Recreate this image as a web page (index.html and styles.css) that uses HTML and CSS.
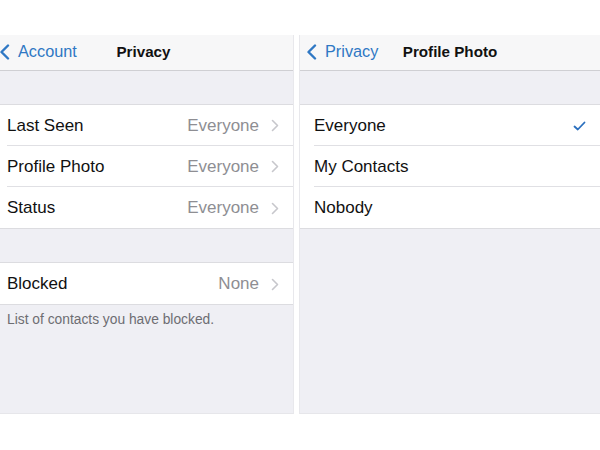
FILE: index.html
```html
<!DOCTYPE html>
<html>
<head>
<meta charset="utf-8">
<link rel="stylesheet" href="styles.css">
</head>
<body>
<div class="screens">
  <section class="panel panel-left">
    <header class="nav nav-left">
      <div class="back">
        <svg class="back-chev" width="11" height="16" viewBox="0 0 11 16"><path d="M9 1.5 L2.5 8 L9 14.5" fill="none" stroke="#2f78c4" stroke-width="2.4" stroke-linecap="round" stroke-linejoin="round"/></svg>
        <span class="back-label">Account</span>
      </div>
      <div class="title">Privacy</div>
    </header>
    <div class="spacer"></div>
    <div class="group">
      <div class="row"><div class="row-inner"><span class="label">Last Seen</span><span class="value">Everyone</span><svg class="chev" width="8" height="13" viewBox="0 0 8 13"><path d="M1.5 1.5 L6.5 6.5 L1.5 11.5" fill="none" stroke="#c7c7cc" stroke-width="1.6" stroke-linecap="round" stroke-linejoin="round"/></svg></div></div>
      <div class="row"><div class="row-inner"><span class="label">Profile Photo</span><span class="value">Everyone</span><svg class="chev" width="8" height="13" viewBox="0 0 8 13"><path d="M1.5 1.5 L6.5 6.5 L1.5 11.5" fill="none" stroke="#c7c7cc" stroke-width="1.6" stroke-linecap="round" stroke-linejoin="round"/></svg></div></div>
      <div class="row last"><div class="row-inner"><span class="label">Status</span><span class="value">Everyone</span><svg class="chev" width="8" height="13" viewBox="0 0 8 13"><path d="M1.5 1.5 L6.5 6.5 L1.5 11.5" fill="none" stroke="#c7c7cc" stroke-width="1.6" stroke-linecap="round" stroke-linejoin="round"/></svg></div></div>
    </div>
    <div class="spacer"></div>
    <div class="group">
      <div class="row last"><div class="row-inner"><span class="label">Blocked</span><span class="value">None</span><svg class="chev" width="8" height="13" viewBox="0 0 8 13"><path d="M1.5 1.5 L6.5 6.5 L1.5 11.5" fill="none" stroke="#c7c7cc" stroke-width="1.6" stroke-linecap="round" stroke-linejoin="round"/></svg></div></div>
    </div>
    <p class="footer">List of contacts you have blocked.</p>
  </section>
  <section class="panel panel-right">
    <header class="nav nav-right">
      <div class="back">
        <svg class="back-chev" width="11" height="16" viewBox="0 0 11 16"><path d="M9 1.5 L2.5 8 L9 14.5" fill="none" stroke="#2f78c4" stroke-width="2.4" stroke-linecap="round" stroke-linejoin="round"/></svg>
        <span class="back-label">Privacy</span>
      </div>
      <div class="title">Profile Photo</div>
    </header>
    <div class="spacer"></div>
    <div class="group group-right">
      <div class="row"><div class="row-inner"><span class="label">Everyone</span><svg class="check" width="13" height="10" viewBox="0 0 13 10"><path d="M1.5 5.5 L4.8 8.5 L11.5 1.5" fill="none" stroke="#2a6fbe" stroke-width="1.8" stroke-linecap="round" stroke-linejoin="round"/></svg></div></div>
      <div class="row"><div class="row-inner"><span class="label">My Contacts</span></div></div>
      <div class="row last"><div class="row-inner"><span class="label">Nobody</span></div></div>
    </div>
  </section>
</div>
</body>
</html>
```

FILE: styles.css
```css
html, body {
  margin: 0;
  padding: 0;
  background: #ffffff;
  font-family: "Liberation Sans", Arial, sans-serif;
}

.screens {
  display: flex;
  gap: 5px;
  padding-top: 35px;
  width: 600px;
  height: 450px;
  box-sizing: border-box;
}

.panel {
  background: #efeff4;
  height: 379px;
  display: flex;
  flex-direction: column;
  border-bottom: 1px solid #e6e6ea;
  box-sizing: border-box;
}

.panel-left {
  width: 294px;
  border-right: 1px solid #e8e8ec;
}

.panel-right {
  flex: 1;
  border-left: 1px solid #e8e8ec;
}

.nav {
  height: 36px;
  box-sizing: border-box;
  background: #f7f7f8;
  border-bottom: 1px solid #cfcfd3;
  display: grid;
  grid-template-columns: 1fr auto 1fr;
  align-items: center;
  padding-bottom: 2px;
}

.back {
  display: flex;
  align-items: center;
  gap: 8px;
  color: #2f78c4;
  font-size: 16.3px;
}

.nav-left .back {
  margin-left: -1px;
}

.nav-right .back {
  margin-left: 6px;
}

.back-chev {
  display: block;
}

.nav-left .title {
  margin-left: -6px;
}

.title {
  font-weight: bold;
  font-size: 15.2px;
  color: #111;
}

.spacer {
  height: 33px;
}

.group {
  background: #ffffff;
  border-top: 1px solid #dcdce0;
  border-bottom: 1px solid #dcdce0;
}

.row {
  height: 41px;
  padding-left: 7px;
  display: flex;
}

.row.last {
  height: 41px;
}

.group-right .row {
  padding-left: 14px;
}

.row-inner {
  flex: 1;
  display: flex;
  align-items: center;
  border-bottom: 1px solid #e0e0e4;
  padding-right: 15px;
  padding-top: 1px;
  box-sizing: border-box;
}

.row.last .row-inner {
  border-bottom: none;
}

.label {
  flex: 1;
  font-size: 17px;
  color: #111;
}

.value {
  font-size: 17px;
  color: #8e8e93;
  margin-right: 12px;
}

.chev {
  display: block;
  margin-right: -1px;
}

.check {
  display: block;
  margin-right: -1px;
}

.footer {
  margin: 0;
  padding: 7px 0 0 7px;
  font-size: 13.8px;
  color: #6d6d72;
}
```
